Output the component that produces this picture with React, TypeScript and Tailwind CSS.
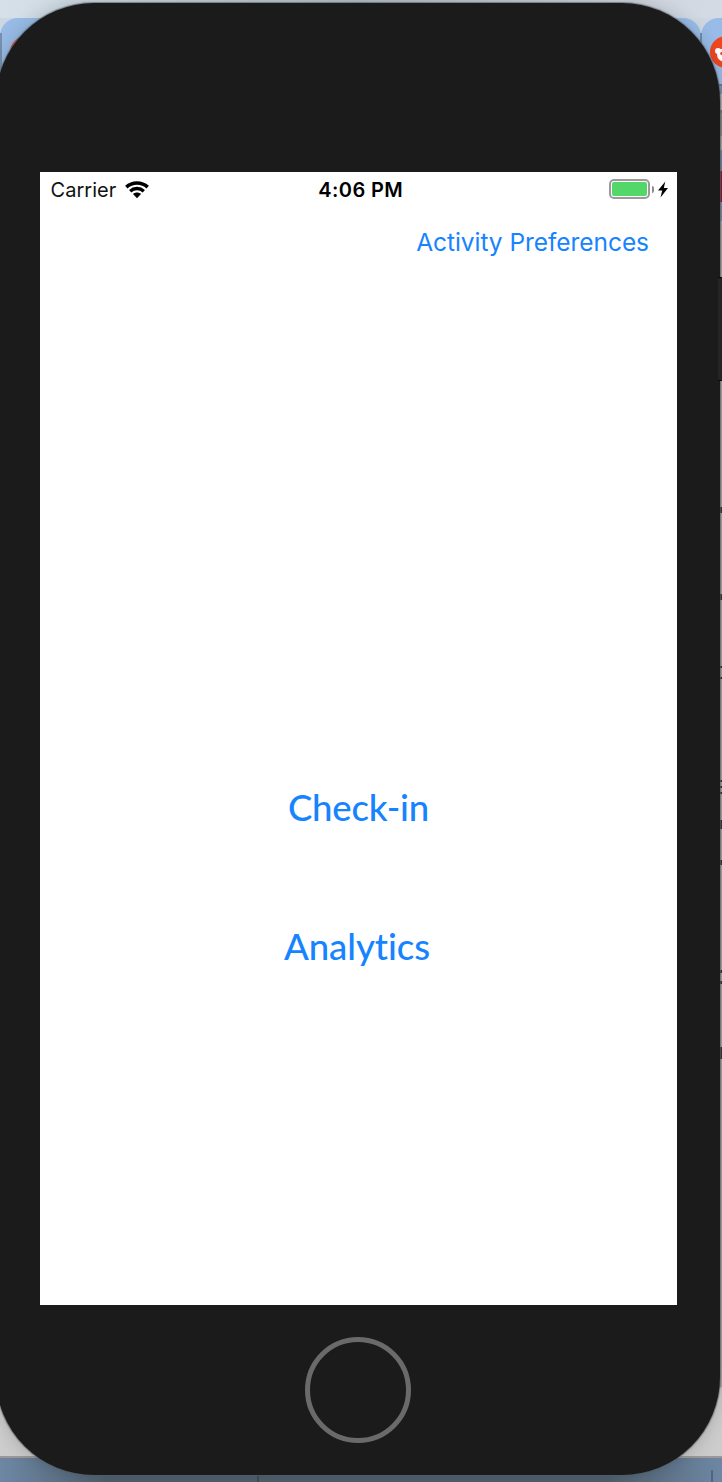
function WifiIcon() {
  return (
    <svg viewBox="0 0 24 18" className="ml-[9px] h-[18px] w-6 shrink-0" fill="none" stroke="#000">
      <path d="M1.3 6.1C7.3 .7 16.7 .7 22.7 6.1" strokeWidth="3.6" />
      <path d="M5.2 10.2C9.1 6.6 14.9 6.6 18.8 10.2" strokeWidth="3.4" />
      <path d="M8 13.1C10.2 11.1 13.8 11.1 16 13.1L12 17.2Z" fill="#000" stroke="none" />
    </svg>
  );
}

function Battery() {
  return (
    <div className="flex items-center">
      <div className="h-5 w-[41px] rounded-[5px] border-2 border-[#9b9b9b] p-px">
        <div className="h-full rounded-[2px] bg-[#53d769]" />
      </div>
      <div className="ml-[2px] h-[7px] w-[2px] rounded-r-full bg-[#8d8d8d]" />
      <svg viewBox="0 0 10 17" className="ml-[4px] h-[17px] w-[10px]">
        <path d="M7.3 .5L0 9.5H4.2L2.5 16.5L10 7H5.8Z" fill="#000" />
      </svg>
    </div>
  );
}

function Desktop() {
  return (
    <div className="absolute inset-0 flex flex-col bg-[#aaa9a6]">
      <div className="h-[18px] shrink-0 bg-linear-to-r from-[#d5e0e8] via-[#b5c0c8] to-[#d5dbe5]" />
      <div className="relative flex h-[66px] shrink-0 bg-[#ccd7e2]">
        <div className="flex w-[701px] items-start rounded-t-[18px] bg-[#98bce7]">
          <div className="mt-[15px] h-[51px] w-[2px] bg-[#7890ae]" />
          <div className="ml-[8px] mt-[18px] size-8 rounded-full bg-[#df5736]" />
        </div>
        <div className="grow rounded-tl-[18px] bg-[#98bce7]" />
        <div className="absolute left-[700px] top-[15px] h-[51px] w-[2px] bg-[#708bad]" />
        <svg viewBox="0 0 32 32" className="absolute left-[710px] top-[18px] size-8">
          <circle cx="16" cy="16" r="16" fill="#f04720" />
          <circle cx="8" cy="15" r="3" fill="#fff" />
          <ellipse cx="16" cy="19" rx="9" ry="7" fill="#fff" />
          <circle cx="12" cy="17.5" r="1.8" fill="#f04720" />
        </svg>
      </div>
      <div className="h-[2px] shrink-0 bg-[#777b7b]" />
      <div className="h-2 shrink-0 bg-[#7895b3]" />
      <div className="h-[16px] shrink-0 bg-[#b5b6b5]" />
      <div className="h-[3px] shrink-0 bg-[#777]" />
      <div className="h-[23px] shrink-0 bg-[#888986]" />
      <div className="h-[14px] shrink-0 bg-[#aaa9a6]" />
      <div className="h-[21px] shrink-0 bg-[#73859a]" />
      <div className="h-[31px] shrink-0 bg-[#7e1d37]" />
      <div className="h-[19px] shrink-0 bg-[#818ca2]" />
      <div className="h-[1166px] shrink-0 bg-[#aaa9a6]" />
      <div className="h-[69px] shrink-0 bg-linear-to-r from-[#cdcdcd] via-[#999] to-[#cdcdcd]" />
      <div className="h-[2px] shrink-0 bg-[#9b9897]" />
      <div className="flex grow bg-linear-to-r from-[#6d87a4] from-0% via-[#50606e] via-15% to-[#50606e] to-85%">
        <div className="ml-[257px] mt-4 h-[10px] w-[2px] bg-[#454c56]" />
        <div className="grow bg-linear-to-r from-[#50606e] from-75% to-[#6d87a4]" />
      </div>
      <div className="absolute left-[711px] top-[1470px] h-3 w-[2px] bg-[#52657b]" />
    </div>
  );
}

const marks = [
  "top-[507px] h-[6px]", "top-[594px] h-[6px]", "top-[666px] h-[2px]", "top-[677px] h-[2px]",
  "top-[780px] h-[2px]", "top-[786px] h-[2px]", "top-[792px] h-[2px]", "top-[820px] h-[9px]",
  "top-[860px] h-[5px]", "top-[970px] h-[3px]", "top-[981px] h-[3px]", "top-[1047px] h-[12px]",
];

export default function App() {
  return (
    <div className="relative h-[1482px] w-[722px] overflow-hidden bg-[#aaa9a6] font-['Inter',sans-serif]">
      <Desktop />
      {marks.map((m) => (
        <div key={m} className={`absolute left-[720px] w-[2px] bg-[#333] ${m}`} />
      ))}
      <div className="absolute -left-1 top-[3px] flex h-[1472px] w-[724px] flex-col rounded-[98px] bg-[#1b1b1b] pl-[44px] pt-[169px] shadow-[0_0_1px_1px_rgba(85,95,105,0.65),0_0_18px_rgba(0,0,0,0.18)]">
        <main className="flex h-[1133px] w-[637px] shrink-0 flex-col bg-white">
          <header className="grid h-[35px] grid-cols-3 items-center pl-[10.5px] pr-[8px] text-[20px] leading-none text-[#111]">
            <div className="flex items-center">
              <span className="tracking-[0.05px]">Carrier</span>
              <WifiIcon />
            </div>
            <div className="pl-[2px] text-center font-semibold tracking-[0.4px] text-black">4:06 PM</div>
            <div className="flex justify-end pb-px pr-px">
              <Battery />
            </div>
          </header>
          <button className="mr-7 mt-[19px] self-end whitespace-nowrap text-[24.5px] leading-8 tracking-[-0.05px] text-[#1683ff]">
            Activity Preferences
          </button>
          <button className="mt-[526px] self-center font-['Lato',sans-serif] text-[36.5px] font-medium leading-[46px] tracking-[-0.15px] text-[#1683ff]">
            Check-in
          </button>
          <button className="mr-[3px] mt-[93px] self-center font-['Lato',sans-serif] text-[36.5px] font-medium leading-[46px] tracking-[-0.05px] text-[#1683ff] [font-variant-ligatures:none]">
            Analytics
          </button>
        </main>
        <div className="ml-[265px] mt-8 size-[106px] shrink-0 rounded-full border-[5px] border-[#6a6a6a]" />
      </div>
      <div className="absolute left-[718px] top-[277px] h-[104px] w-[4px] border-y border-[#080808] bg-[#242424]" />
    </div>
  );
}
